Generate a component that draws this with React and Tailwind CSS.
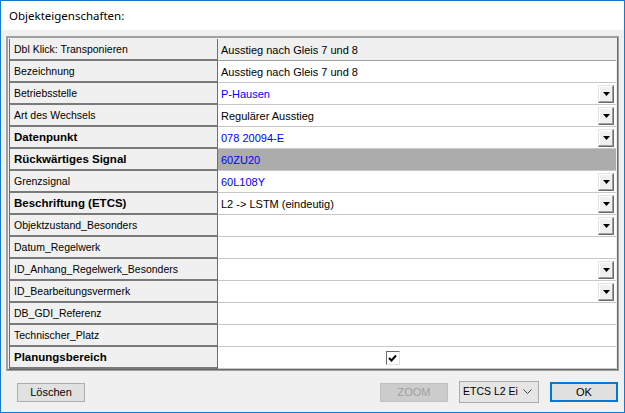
import React from 'react';

const rows = [
  { label: 'Dbl Klick: Transponieren', value: 'Ausstieg nach Gleis 7 und 8', head: true },
  { label: 'Bezeichnung', value: 'Ausstieg nach Gleis 7 und 8' },
  { label: 'Betriebsstelle', value: 'P-Hausen', blue: true, drop: true },
  { label: 'Art des Wechsels', value: 'Regulärer Ausstieg', drop: true },
  { label: 'Datenpunkt', value: '078 20094-E', blue: true, drop: true, bold: true },
  { label: 'Rückwärtiges Signal', value: '60ZU20', blue: true, bold: true, selected: true },
  { label: 'Grenzsignal', value: '60L108Y', blue: true, drop: true },
  { label: 'Beschriftung (ETCS)', value: 'L2 -> LSTM (eindeutig)', drop: true, bold: true },
  { label: 'Objektzustand_Besonders', value: '', drop: true },
  { label: 'Datum_Regelwerk', value: '' },
  { label: 'ID_Anhang_Regelwerk_Besonders', value: '', drop: true },
  { label: 'ID_Bearbeitungsvermerk', value: '', drop: true },
  { label: 'DB_GDI_Referenz', value: '' },
  { label: 'Technischer_Platz', value: '' },
  { label: 'Planungsbereich', value: '', bold: true, check: true },
];

function DropButton() {
  return (
    <div className="w-[16px] h-[18px] bg-[#f0f0f0] border-t border-l border-t-[#e3e3e3] border-l-[#e3e3e3] border-r border-b border-r-[#696969] border-b-[#696969] flex items-center justify-center shadow-[inset_-1px_-1px_0_#a0a0a0,inset_1px_1px_0_#ffffff]">
      <svg width="7" height="4" viewBox="0 0 7 4">
        <path d="M0 0H7L3.5 4Z" fill="#000" />
      </svg>
    </div>
  );
}

function CheckBox() {
  return (
    <div className="w-[14px] h-[14px] bg-white border-t border-l border-t-[#696969] border-l-[#696969] border-r border-b border-r-[#e3e3e3] border-b-[#e3e3e3] flex items-center justify-center">
      <svg width="9" height="8" viewBox="0 0 9 8">
        <path d="M1 4L3.5 6.5L8 1.5" stroke="#000" strokeWidth="2" fill="none" />
      </svg>
    </div>
  );
}

function Row({ row }) {
  const valueBg = row.head ? 'bg-[#f0f0f0] border-b-[#a0a0a0]' : row.selected ? 'bg-[#acacac] border-b-[#c8c8c8]' : 'bg-white border-b-[#c8c8c8]';
  return (
    <div className="flex h-[22px]">
      <div className={`w-[209px] shrink-0 bg-[#f0f0f0] border-l border-r border-b-2 border-l-[#6d6d6d] border-r-[#6d6d6d] border-b-[#7a7a7a] flex items-center pl-[4px] pt-[2px] text-[#000] ${row.bold ? 'font-bold text-[11.5px]' : 'text-[10.5px]'}`}>
        {row.label}
      </div>
      <div className={`flex-1 border-b flex items-center pl-[3px] pr-[2px] text-[11px] ${valueBg} ${row.blue ? 'text-[#0000ff]' : 'text-[#000]'}`}>
        <span className="flex-1 pt-[1px]">{row.value}</span>
        {row.drop && <DropButton />}
        {row.check && (
          <div className="flex-1 -ml-[64px]">
            <CheckBox />
          </div>
        )}
      </div>
    </div>
  );
}

export default function App() {
  return (
    <div className="w-[625px] h-[413px] border border-[#1979ca] bg-[#f0f0f0] flex flex-col font-['Liberation_Sans',Arial,sans-serif] select-none">
      <div className="h-[29px] bg-white flex items-center pl-[8px] text-[11.5px] text-[#000] font-['Noto_Sans',sans-serif]">
        Objekteigenschaften:
      </div>
      <div className="mt-[6px] ml-[5px] w-[613px] border border-[#a0a0a0]">
        <div className="border border-[#696969] border-l-[#a0a0a0] border-t-[#a0a0a0] bg-[#f0f0f0] px-[1px] pt-[1px]">
          {rows.map((row) => (
            <Row key={row.label} row={row} />
          ))}
        </div>
      </div>
      <div className="flex items-center mt-[10px] text-[11px] text-[#000]">
        <button className="ml-[16px] w-[68px] h-[19px] bg-[#e1e1e1] border border-[#adadad] flex items-center justify-center">
          Löschen
        </button>
        <button disabled className="ml-[295px] w-[68px] h-[19px] bg-[#cccccc] border border-[#bfbfbf] text-[#a0a0a0] flex items-center justify-center">
          ZOOM
        </button>
        <div className="ml-[11px] w-[80px] h-[22px] bg-[#e5e5e5] border border-[#acacac] flex items-center pl-[3px] pr-[6px] text-[10.5px]">
          <span className="flex-1 whitespace-nowrap">ETCS L2 Ei</span>
          <svg width="9" height="6" viewBox="0 0 9 6">
            <path d="M0.5 0.5L4.5 4.5L8.5 0.5" stroke="#404040" strokeWidth="1" fill="none" />
          </svg>
        </div>
        <button className="ml-[11px] w-[68px] h-[20px] bg-[#e1e1e1] border-2 border-[#0078d7] flex items-center justify-center">
          OK
        </button>
      </div>
    </div>
  );
}
